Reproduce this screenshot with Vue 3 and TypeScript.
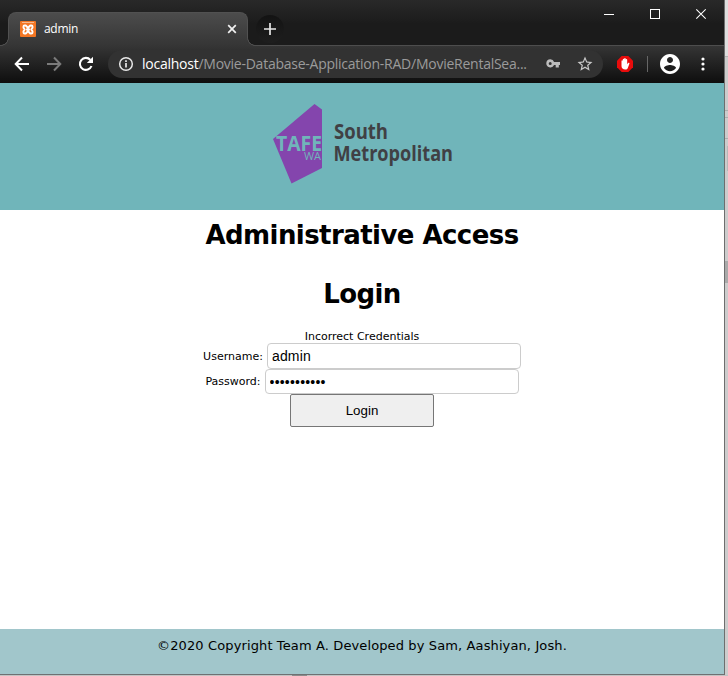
<script setup lang="ts">
import { ref } from 'vue'

const username = ref<string>('admin')
const password = ref<string>('adminaccess')
const message = ref<string>('Incorrect Credentials')
</script>

<template>
  <div class="desktop">
    <div class="window">
      <div class="tabstrip">
        <div class="tab">
          <svg class="favicon" viewBox="0 0 16 16">
            <rect width="16" height="16" rx="1" fill="#f37623" />
            <rect x="2" y="1" width="12" height="1" fill="#f9b98c" />
            <path d="M4.500 4.500h1.200L8 6.700l2.300-2.200h1.200q1 0 1 1v1.300L11.300 8.500l1.200 1.700v1.300q0 1-1 1h-1.200L8 10.300l-2.300 2.200H4.500q-1 0-1-1v-1.300l1.200-1.700-1.200-1.700V5.500q0-1 1-1zM6 8.500h4" fill="none" stroke="#fff" stroke-width="1.900" stroke-linejoin="round" />
          </svg>
          <span class="tab-title">admin</span>
          <svg class="tab-close" viewBox="0 0 10 10"><path d="M1.200 1.200l7.600 7.600M8.800 1.200L1.200 8.800" stroke="#f1f1f1" stroke-width="1.700" /></svg>
        </div>
        <div class="new-tab">
          <svg width="12" height="12" viewBox="0 0 12 12"><path d="M6 0v12M0 6h12" stroke="#e8e8e8" stroke-width="1.700" /></svg>
        </div>
        <div class="controls">
          <svg width="102" height="12" viewBox="0 0 102 12" fill="none" stroke="#fff">
            <path d="M0 6.500h10" />
            <rect x="46.500" y="1.500" width="9" height="9" />
            <path d="M92.300 1.300l9.400 9.400M101.700 1.300l-9.400 9.400" stroke-width="1.100" />
          </svg>
        </div>
      </div>

      <div class="toolbar">
        <svg class="nav" viewBox="0 0 16 16"><path d="M15 8H2M8 1.500L1.700 8 8 14.500" fill="none" stroke="#fff" stroke-width="2" /></svg>
        <svg class="nav" viewBox="0 0 16 16"><path d="M1 8h13M8 1.500L14.300 8 8 14.500" fill="none" stroke="#7b7b7b" stroke-width="2" /></svg>
        <svg class="nav" viewBox="0 0 16 16"><path d="M13.500 10A6 6 0 1 1 12.400 3.900" fill="none" stroke="#fff" stroke-width="2.100" /><path d="M15 .8V7H8.800z" fill="#fff" /></svg>
        <div class="omnibox">
          <svg class="info" viewBox="0 0 16 16"><circle cx="8" cy="8" r="6.300" fill="none" stroke="#e8e8e8" stroke-width="1.500" /><path d="M8 7v4.500M8 4.200v1.700" stroke="#e8e8e8" stroke-width="1.700" /></svg>
          <div class="url"><span class="host">localhost</span>/Movie-Database-Application-RAD/MovieRentalSea...</div>
          <svg class="key" viewBox="0 0 14 9"><path fill-rule="evenodd" d="M4.200.2a4 4 0 0 1 3.900 2.700H14v3.200h-1.200v2.500H9.700V6.100H8.100A4.100 4.100 0 1 1 4.200.2zM4.200 2.900a1.500 1.500 0 1 0 0 3 1.500 1.500 0 0 0 0-3z" fill="#bdbdbd" /></svg>
          <svg class="star" viewBox="0 0 24 24"><path d="M22 9.240l-7.190-.62L12 2 9.190 8.630 2 9.240l5.460 4.730L5.820 21 12 17.270 18.180 21l-1.630-7.030L22 9.240zM12 15.400l-3.760 2.270 1-4.280-3.320-2.880 4.380-.38L12 6.100l1.710 4.040 4.380.38-3.320 2.880 1 4.280L12 15.400z" fill="#c8c8c8" /></svg>
        </div>
        <svg class="blocker" viewBox="0 0 16 16">
          <path d="M4.700 0h6.600L16 4.700v6.600L11.300 16H4.700L0 11.300V4.700z" fill="#e80c0c" />
          <path d="M4.500 8V5.100c0-1 1.300-1 1.300 0V3.500c0-1 1.400-1 1.400 0v-.7c0-1 1.500-1 1.500 0v1c0-1 1.500-1 1.500 0v4.500l.9-1.200c.6-.7 1.600-.2 1.300.6L10.800 12c-.5 1-1.200 1.600-2.500 1.600-2.400 0-3.800-1.500-3.800-3.600z" fill="#fff" />
        </svg>
        <div class="divider"></div>
        <svg class="profile" viewBox="2 2 20 20"><path d="M12 2C6.480 2 2 6.480 2 12s4.480 10 10 10 10-4.480 10-10S17.520 2 12 2zm0 3c1.660 0 3 1.340 3 3s-1.340 3-3 3-3-1.340-3-3 1.340-3 3-3zm0 14.200c-2.500 0-4.710-1.280-6-3.220.03-1.990 4-3.080 6-3.080 1.990 0 5.970 1.090 6 3.080-1.290 1.940-3.500 3.220-6 3.220z" fill="#fff" /></svg>
        <svg class="menu" viewBox="0 0 4 14" fill="#fff"><circle cx="2" cy="2" r="1.600" /><circle cx="2" cy="7" r="1.600" /><circle cx="2" cy="12" r="1.600" /></svg>
      </div>

      <header class="banner">
        <svg class="logo" width="184" height="84" viewBox="0 0 184 84">
          <path d="M43.500 2L51 7.500V66L20.500 81.500 2 37z" fill="#8445ad" />
          <text class="tafe" x="5" y="49" textLength="46" lengthAdjust="spacingAndGlyphs">TAFE</text>
          <text class="wa" x="33" y="58" textLength="17" lengthAdjust="spacingAndGlyphs">WA</text>
          <text class="name" x="63" y="37" textLength="54" lengthAdjust="spacingAndGlyphs">South</text>
          <text class="name" x="62.500" y="58.500" textLength="119.500" lengthAdjust="spacingAndGlyphs">Metropolitan</text>
        </svg>
      </header>

      <main class="content">
        <h1 class="access">Administrative Access</h1>
        <h1 class="heading">Login</h1>
        <form @submit.prevent>
          <p class="message">{{ message }}</p>
          <label class="row user"><span>Username:</span><input v-model="username" type="text" /></label>
          <label class="row pass"><span>Password:</span><input v-model="password" type="password" /></label>
          <button type="submit">Login</button>
        </form>
      </main>

      <footer class="footer">©2020 Copyright Team A. Developed by Sam, Aashiyan, Josh.</footer>
    </div>
    <div class="behind"></div>
  </div>
</template>

<style>
body {
  margin: 0;
  overflow: hidden;
}
</style>

<style scoped>
* {
  box-sizing: border-box;
}
.desktop {
  display: grid;
  grid-template-columns: 725px 3px;
  grid-template-rows: 675px;
  width: 728px;
  height: 676px;
  background: linear-gradient(90deg, transparent 292px, #8b8b8b 292px, #8b8b8b 307px, transparent 307px), #c4c4c4;
}
.behind {
  background:
    linear-gradient(#b3b3b3, #b3b3b3) 0 56px / 3px 1px no-repeat,
    linear-gradient(#aeaeae, #aeaeae) 0 110px / 3px 1px no-repeat,
    linear-gradient(#aeaeae, #aeaeae) 0 117px / 3px 1px no-repeat,
    linear-gradient(#aeaeae, #aeaeae) 0 138px / 3px 1px no-repeat,
    linear-gradient(#b8b8b8, #b8b8b8) 2px 146px / 1px 25px no-repeat,
    linear-gradient(#aaaaaa, #aaaaaa) 0 261px / 3px 22px no-repeat,
    linear-gradient(#dedede 0, #dedede 56px, #cccccc 56px);
}
.window {
  display: flex;
  flex-direction: column;
  border-right: 1px solid #6e6e6e;
  border-bottom: 1px solid #6e7173;
  background: #fff;
}
.tabstrip {
  flex: none;
  display: flex;
  height: 46px;
  padding: 12px 14px 0 8px;
  background: linear-gradient(#292929, #1b1b1b 24px, #1b1b1b);
  border-bottom: 1px solid #4d4d4d;
}
.tab {
  position: relative;
  display: flex;
  align-items: center;
  width: 240px;
  height: 34px;
  padding: 0 10px 0 12px;
  border: 1px solid #515151;
  border-bottom: 0;
  border-radius: 8px 8px 0 0;
  background: linear-gradient(#4c4c4c, #353535);
}
.tab::before,
.tab::after {
  content: '';
  position: absolute;
  bottom: 0;
  width: 8px;
  height: 8px;
}
.tab::before {
  left: -8px;
  background: radial-gradient(circle at 0 0, transparent 6.5px, #4d4d4d 7px, #4d4d4d 7.6px, #363636 8px);
}
.tab::after {
  right: -8px;
  background: radial-gradient(circle at 100% 0, transparent 6.5px, #4d4d4d 7px, #4d4d4d 7.6px, #363636 8px);
}
.favicon {
  width: 16px;
  height: 16px;
  margin: -1px 0 0 -1px;
}
.tab-title {
  flex: 1;
  margin: -2px 0 0 8px;
  color: #fff;
  font: 12px/16px 'Open Sans', 'Noto Sans', sans-serif;
  letter-spacing: -0.3px;
}
.tab-close {
  width: 10px;
  height: 10px;
  margin-top: -1px;
}
.new-tab {
  display: flex;
  align-items: center;
  justify-content: center;
  width: 28px;
  height: 28px;
  margin: 3px 0 0 8px;
  border-radius: 50%;
  background: linear-gradient(#131313, #1e1e1e);
}
.controls {
  margin: -4px 4px 0 auto;
}
.controls svg {
  display: block;
}
.toolbar {
  flex: none;
  display: flex;
  align-items: center;
  height: 37px;
  padding-left: 14px;
  background: linear-gradient(#353535, #0e0e0e);
}
.nav {
  flex: none;
  width: 16px;
  height: 16px;
  margin: -1px 16px 0 0;
}
.nav:nth-child(3) {
  margin-right: 14px;
}
.omnibox {
  flex: none;
  display: flex;
  align-items: center;
  width: 495px;
  height: 28px;
  margin-top: -1px;
  padding: 0 10px;
  border-radius: 14px;
  background: #323232;
}
.info {
  flex: none;
  width: 16px;
  height: 16px;
}
.url {
  flex: none;
  width: 404px;
  margin-left: 8px;
  color: #9b9b9b;
  font: 14px/20px 'Open Sans', 'Noto Sans', sans-serif;
  letter-spacing: -0.25px;
  white-space: nowrap;
}
.host {
  color: #fff;
}
.key {
  flex: none;
  width: 14px;
  height: 9px;
  margin-top: -1px;
}
.star {
  flex: none;
  width: 18px;
  height: 18px;
  margin-left: 16px;
}
.blocker {
  flex: none;
  width: 16px;
  height: 16px;
  margin: -1px 0 0 14px;
}
.divider {
  flex: none;
  width: 1px;
  height: 16px;
  margin: -1px 0 0 14px;
  background: #666;
}
.profile {
  flex: none;
  width: 20px;
  height: 20px;
  margin: -1px 0 0 12px;
}
.menu {
  flex: none;
  width: 4px;
  height: 14px;
  margin: -1px 0 0 21px;
}
.banner {
  flex: none;
  height: 127px;
  padding: 19px 0 0 271px;
  background: #70b5ba;
}
.logo {
  display: block;
}
.tafe {
  fill: #70b5ba;
  font: 700 20.500px 'Open Sans', sans-serif;
}
.wa {
  fill: #70b5ba;
  font: 500 11px 'Open Sans', sans-serif;
}
.name {
  fill: #404044;
  font: 700 20.500px 'Open Sans', sans-serif;
}
.content {
  flex: 1;
  font-family: 'DejaVu Sans', Verdana, sans-serif;
  text-align: center;
  color: #000;
}
h1 {
  margin: 0;
  font-size: 26px;
  line-height: 32px;
  letter-spacing: -0.56px;
}
.access {
  margin-top: 9px;
}
.heading {
  margin-top: 27px;
}
form {
  display: flex;
  flex-direction: column;
  align-items: center;
  margin-top: 19px;
}
.message {
  height: 14px;
  margin: 0;
  font-size: 11px;
  line-height: 15px;
}
.row {
  display: flex;
  align-items: center;
  gap: 4px;
  font-size: 11px;
  line-height: 14px;
}
.user span {
  padding-top: 2px;
}
.pass span {
  padding-top: 1px;
}
input {
  width: 254px;
  height: 25px;
  margin: 0;
  padding: 0 4px;
  border: 1px solid #ccc;
  border-radius: 4px;
  outline: 0;
  background: #fff;
  color: #000;
  font: 14px 'Liberation Sans', Arial, sans-serif;
}
.user input {
  height: 26px;
  letter-spacing: 0.2px;
}
.pass input {
  letter-spacing: 0.2px;
}
button {
  width: 144px;
  height: 33px;
  padding: 0 0 1px;
  border: 1px solid #767676;
  border-radius: 2px;
  background: #efefef;
  color: #000;
  font: 13.333px 'Liberation Sans', Arial, sans-serif;
}
.footer {
  flex: none;
  height: 45px;
  padding-top: 8px;
  background: #a1c6cb;
  color: #000;
  font: 13px/18px 'DejaVu Sans', Verdana, sans-serif;
  letter-spacing: 0.12px;
  text-align: center;
}
</style>
